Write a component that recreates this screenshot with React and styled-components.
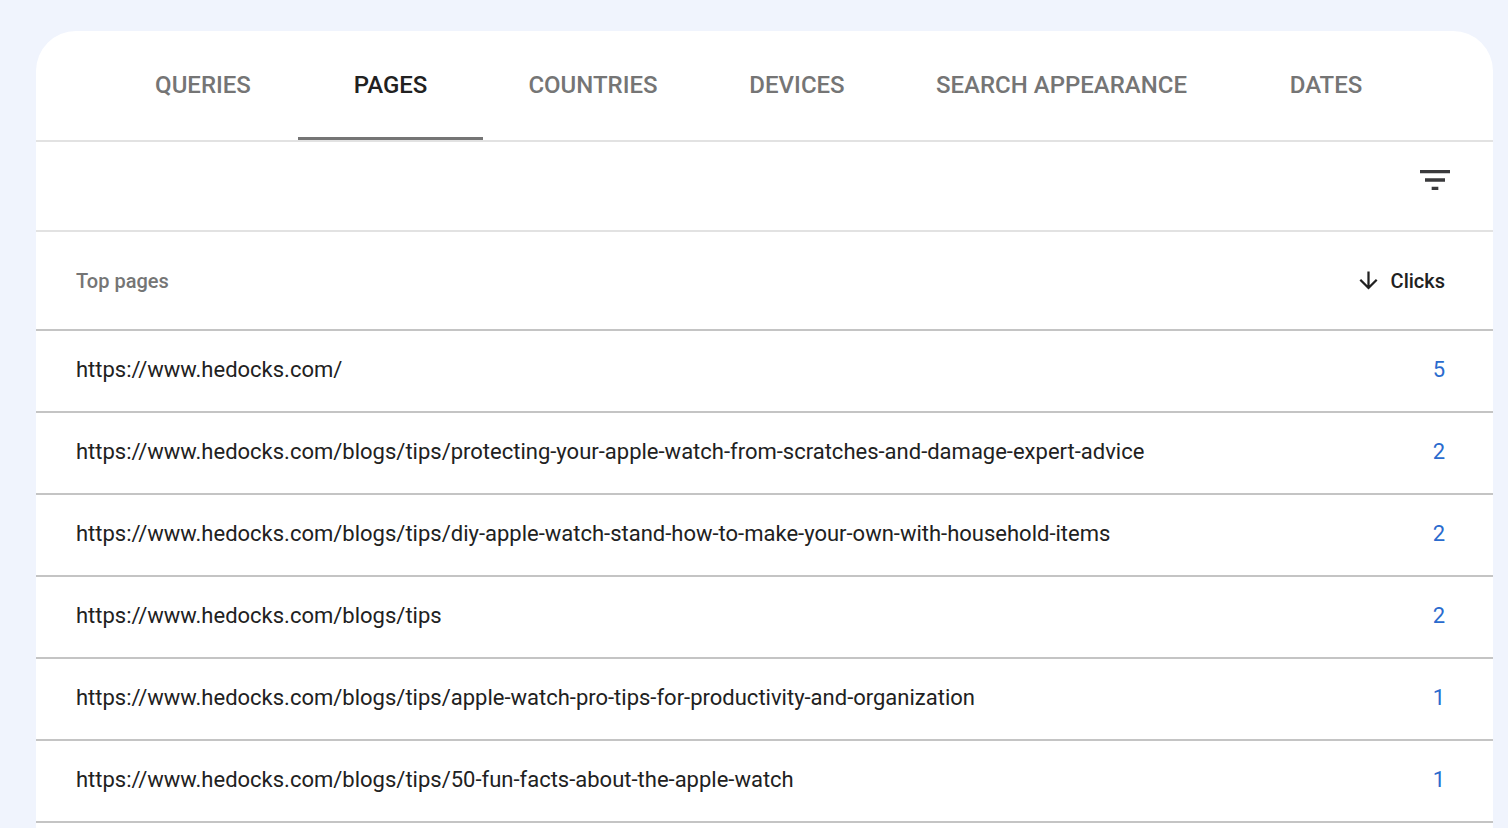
import React from "react";
import styled, { createGlobalStyle } from "styled-components";

const Global = createGlobalStyle`
  * { box-sizing: border-box; }
  body { margin: 0; background: #f0f4fd; font-family: Roboto, "Liberation Sans", sans-serif; color: #202124; }
`;
const Page = styled.div`
  display: flex;
  min-height: 100vh;
  padding: 31px 15px 0 36px;
`;
const Card = styled.main`
  flex: 1;
  min-width: 0;
  background: #fff;
  border-radius: 40px 40px 0 0;
`;
const Tabs = styled.nav`
  display: flex;
  height: 111px;
  padding: 0 73px 0 72px;
  border-bottom: 2px solid #e2e2e2;
`;
const Tab = styled.button`
  border: 0;
  border-bottom: 3px solid ${(p) => (p.$active ? "#757575" : "transparent")};
  background: none;
  padding: 1px 0 0;
  flex: ${(p) => p.$share} 1 0;
  font: 500 24px/28px Roboto, "Liberation Sans", sans-serif;
  white-space: nowrap;
  color: ${(p) => (p.$active ? "#212121" : "#757575")};
`;
const Toolbar = styled.div`
  display: flex;
  justify-content: flex-end;
  height: 90px;
  padding: 18px 38px 0 0;
  border-bottom: 2px solid #e2e2e2;
`;
const IconButton = styled.button`
  width: 40px;
  height: 40px;
  padding: 0;
  border: 0;
  background: none;
  color: #3a3a3c;
`;
const Table = styled.table`
  width: 100%;
  border-collapse: separate;
  border-spacing: 0;
`;
const Heading = styled.th`
  height: 99px;
  padding: ${(p) => (p.$end ? "0 48px 0 0" : "0 0 0 40px")};
  border-bottom: 2px solid #c4c4c4;
  text-align: ${(p) => (p.$end ? "right" : "left")};
  font-size: 20px;
  line-height: 24px;
  font-weight: 500;
  color: #757575;
`;
const Sort = styled.button`
  display: inline-flex;
  align-items: center;
  gap: 9px;
  padding: 0;
  border: 0;
  background: none;
  font: inherit;
  color: #212121;
  vertical-align: middle;
`;
const Cell = styled.td`
  height: 82px;
  padding: ${(p) => (p.$end ? "0 48px 2px 0" : "0 0 2px 40px")};
  border-bottom: 2px solid #c4c4c4;
  text-align: ${(p) => (p.$end ? "right" : "left")};
  font-size: 22px;
  line-height: 28px;
  color: ${(p) => (p.$end ? "#2a6bce" : "#212121")};
`;

const tabs = [
  ["QUERIES", 190],
  ["PAGES", 185],
  ["COUNTRIES", 220],
  ["DEVICES", 188],
  ["SEARCH APPEARANCE", 341],
  ["DATES", 188],
];
const base = "https://www.hedocks.com/";
const rows = [
  ["", 5],
  ["blogs/tips/protecting-your-apple-watch-from-scratches-and-damage-expert-advice", 2],
  ["blogs/tips/diy-apple-watch-stand-how-to-make-your-own-with-household-items", 2],
  ["blogs/tips", 2],
  ["blogs/tips/apple-watch-pro-tips-for-productivity-and-organization", 1],
  ["blogs/tips/50-fun-facts-about-the-apple-watch", 1],
];

export default function App() {
  return (
    <Page>
      <Global />
      <Card>
        <Tabs aria-label="Dimensions">
          {tabs.map(([name, share]) => (
            <Tab key={name} $share={share} $active={name === "PAGES"}>{name}</Tab>
          ))}
        </Tabs>
        <Toolbar>
          <IconButton aria-label="Filter rows">
            <svg width="40" height="40" viewBox="0 0 24 24" fill="currentColor">
              <path d="M10 18h4v-2h-4v2zM3 6v2h18V6H3zm3 7h12v-2H6v2z" />
            </svg>
          </IconButton>
        </Toolbar>
        <Table>
          <thead>
            <tr>
              <Heading scope="col">Top pages</Heading>
              <Heading scope="col" $end>
                <Sort>
                  <svg width="27" height="27" viewBox="0 0 24 24" fill="currentColor">
                    <path d="M20 12l-1.41-1.41L13 16.17V4h-2v12.17l-5.58-5.59L4 12l8 8 8-8z" />
                  </svg>
                  Clicks
                </Sort>
              </Heading>
            </tr>
          </thead>
          <tbody>
            {rows.map(([path, clicks]) => (
              <tr key={path}>
                <Cell>{base + path}</Cell>
                <Cell $end>{clicks}</Cell>
              </tr>
            ))}
          </tbody>
        </Table>
      </Card>
    </Page>
  );
}
